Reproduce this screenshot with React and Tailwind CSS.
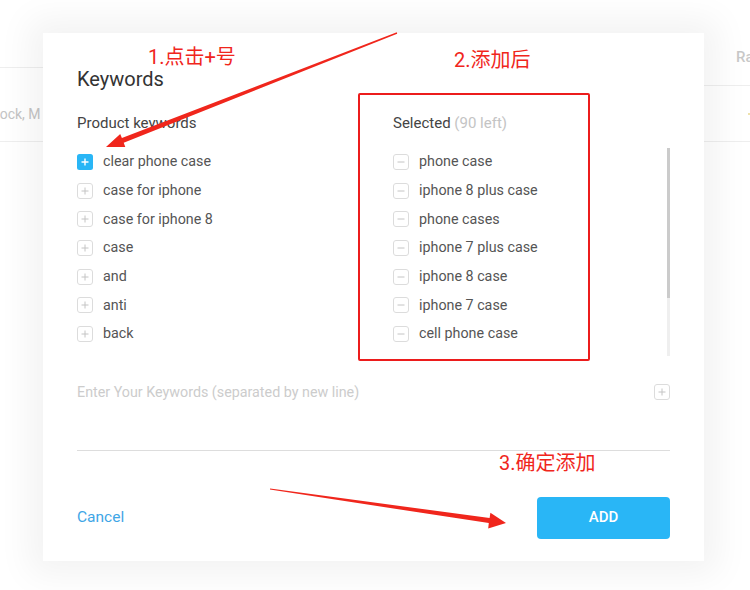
const productKeywords = [
  "clear phone case",
  "case for iphone",
  "case for iphone 8",
  "case",
  "and",
  "anti",
  "back",
];

const selectedKeywords = [
  "phone case",
  "iphone 8 plus case",
  "phone cases",
  "iphone 7 plus case",
  "iphone 8 case",
  "iphone 7 case",
  "cell phone case",
];

function PlusBox({ active }) {
  if (active) {
    return (
      <svg width="16" height="16" viewBox="0 0 16 16" className="shrink-0">
        <rect x="0" y="0" width="16" height="16" rx="2.5" fill="#29b6f6" />
        <path d="M8 4.5v7M4.5 8h7" stroke="#fff" strokeWidth="1.4" />
      </svg>
    );
  }
  return (
    <svg width="16" height="16" viewBox="0 0 16 16" className="shrink-0">
      <rect x="0.5" y="0.5" width="15" height="15" rx="2.5" fill="#fff" stroke="#dcdcdc" />
      <path d="M8 4.5v7M4.5 8h7" stroke="#c4c4c4" strokeWidth="1" />
    </svg>
  );
}

function MinusBox() {
  return (
    <svg width="16" height="16" viewBox="0 0 16 16" className="shrink-0">
      <rect x="0.5" y="0.5" width="15" height="15" rx="2.5" fill="#fff" stroke="#dcdcdc" />
      <path d="M4.5 8h7" stroke="#c4c4c4" strokeWidth="1" />
    </svg>
  );
}

function Arrows() {
  return (
    <svg width="750" height="590" viewBox="0 0 750 590" className="pointer-events-none absolute left-0 top-0">
      <polygon
        points="396.8,32.3 121.9,138.1 120.2,133.9 106,147 125.3,146.9 123.7,142.7 397.2,33.7"
        fill="#f0261c"
      />
      <polygon
        points="269.9,489.6 488.8,523.1 488.2,528.5 506,523 490.4,512.7 489.6,518.1 270.1,488.4"
        fill="#f0261c"
      />
    </svg>
  );
}

export default function App() {
  return (
    <div
      className="relative h-[590px] w-[750px] overflow-hidden bg-white"
      style={{ fontFamily: "Roboto, 'Noto Sans CJK SC', sans-serif" }}
    >
      {/* page behind the dialog */}
      <div className="flex h-full justify-between">
        <div className="w-[43px] pt-[67px]">
          <div className="h-[75px] border-y border-[#eeeeee] pt-[36px] text-[14px] leading-[20px] whitespace-nowrap text-[#c4c4c4] overflow-hidden">
            <span className="-ml-[8px] inline-block">hock, M</span>
          </div>
        </div>
        <div className="w-[46px] pt-[46px]">
          <div className="pl-[32px] text-[15px] leading-[22px] font-medium text-[#c8c8c8] whitespace-nowrap">Ra</div>
          <div className="mt-[17px] h-[57px] border-y border-[#eeeeee] flex items-center justify-end">
            <span className="h-[2px] w-[2px] rounded-full bg-[#e8d890]" />
          </div>
        </div>
      </div>

      {/* dialog */}
      <div className="absolute left-[43px] top-[33px] flex h-[528px] w-[661px] flex-col bg-white px-[34px] pt-[32px] shadow-[0_0_32px_14px_rgba(0,0,0,0.05)]">
        <h2 className="text-[20px] leading-[28px] text-[#333]">Keywords</h2>

        <div className="mt-[20px] grid grid-cols-[316px_1fr]">
          <div>
            <h3 className="text-[15px] leading-[20px] text-[#444]">Product keywords</h3>
            <ul className="mt-[14.7px] h-[208px]">
              {productKeywords.map((k, i) => (
                <li key={k} className="flex h-[28.67px] items-center gap-[10px] text-[14.3px] text-[#555]">
                  <PlusBox active={i === 0} />
                  <span>{k}</span>
                </li>
              ))}
            </ul>
          </div>
          <div>
            <h3 className="text-[15px] leading-[20px] text-[#444]">
              Selected <span className="text-[#c4c4c4]">(90 left)</span>
            </h3>
            <div className="mt-[14.7px] flex h-[208px]">
              <ul className="flex-1">
                {selectedKeywords.map((k) => (
                  <li key={k} className="flex h-[28.67px] items-center gap-[10px] text-[14.3px] text-[#555]">
                    <MinusBox />
                    <span>{k}</span>
                  </li>
                ))}
              </ul>
              <div className="flex w-[3px] flex-col">
                <div className="h-[150px] bg-[#cbcbcb]" />
                <div className="flex-1 bg-[#efefef]" />
              </div>
            </div>
          </div>
        </div>

        <div className="mt-[22px] flex h-[73px] items-start justify-between border-b border-[#dddddd] pt-[4px]">
          <span className="text-[14.3px] leading-[20px] text-[#cccccc]">Enter Your Keywords (separated by new line)</span>
          <span className="mt-[2px]">
            <PlusBox />
          </span>
        </div>

        <div className="mt-[46px] flex items-center justify-between">
          <button type="button" className="text-[15.5px] text-[#3fa6e6]">Cancel</button>
          <button type="button" className="h-[42px] w-[133px] rounded-[4px] bg-[#29b6f6] text-[15px] font-medium text-white">
            ADD
          </button>
        </div>
      </div>

      {/* annotations */}
      <div className="absolute left-[358px] top-[93px] h-[268px] w-[232px] rounded-[2px] border-2 border-[#ec1c1c]" />
      <div className="absolute left-[148px] top-[45px] text-[20px] leading-[24px] text-[#f0261c] whitespace-nowrap">1.点击+号</div>
      <div className="absolute left-[454px] top-[48px] text-[20px] leading-[24px] text-[#f0261c] whitespace-nowrap">2.添加后</div>
      <div className="absolute left-[499px] top-[451px] text-[20px] leading-[24px] text-[#f0261c] whitespace-nowrap">3.确定添加</div>
      <Arrows />
    </div>
  );
}
